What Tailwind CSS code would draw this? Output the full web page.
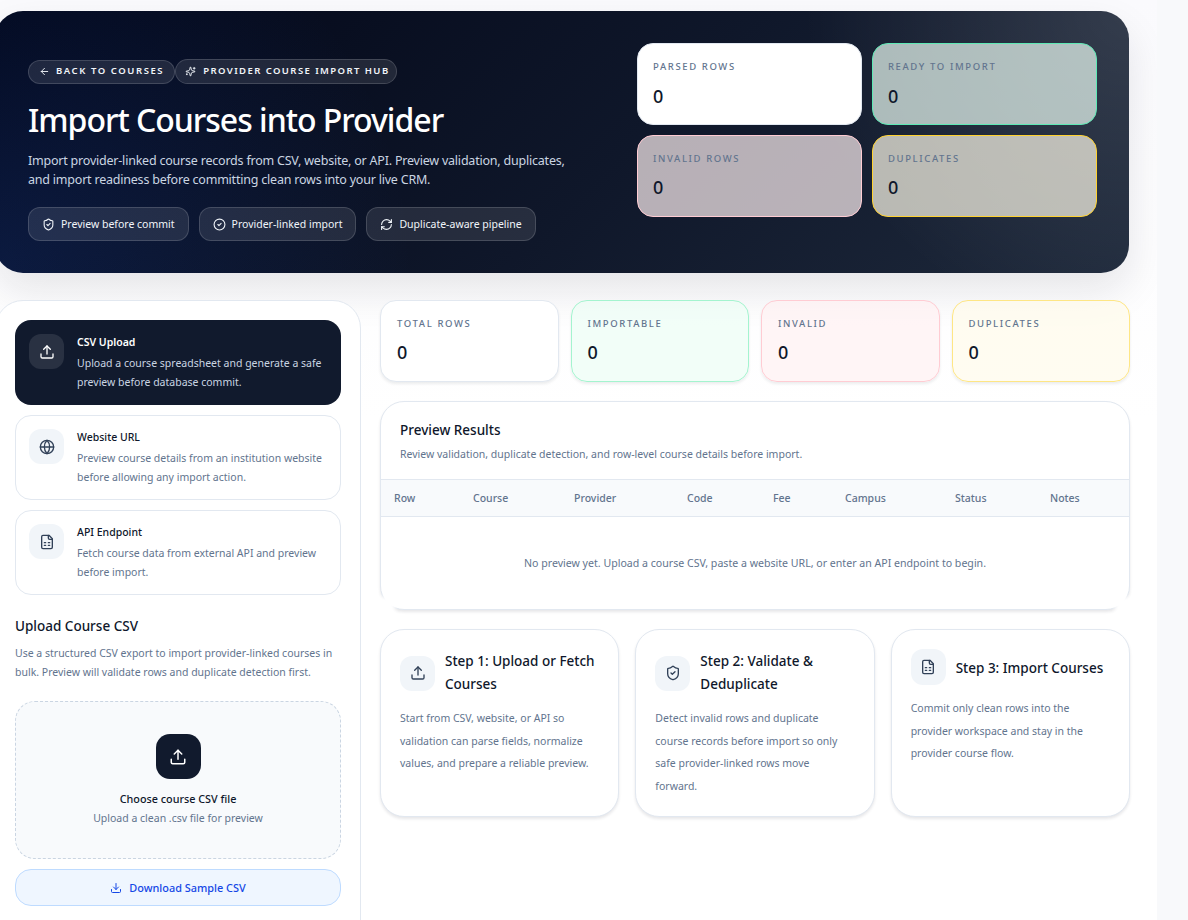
<!DOCTYPE html>
<html lang="en">
<head>
    <meta charset="UTF-8">
    <meta name="viewport" content="width=device-width, initial-scale=1.0">
    <title>Import Courses into Provider</title>
    <script src="https://cdn.jsdelivr.net/npm/@tailwindcss/browser@4"></script>
</head>
<body class="h-[920px] w-[1188px] overflow-hidden bg-[#f8f9fb] font-['Noto_Sans',sans-serif] text-slate-900">
<div class="h-[920px] w-[1157px] overflow-hidden bg-white bg-[linear-gradient(180deg,#fafafd_0px,#ffffff_420px)] pt-[11px] pl-0">
    <div class="ml-[-5px] w-[1135px]">

        <!-- hero -->
        <section class="flex h-[262px] w-[1134px] justify-between rounded-[28px] bg-[radial-gradient(circle_at_top_right,rgba(255,255,255,0.12),transparent_28%),radial-gradient(circle_at_bottom_left,rgba(37,99,235,0.17),transparent_36%),linear-gradient(135deg,#020617,#0f172a_55%,#1e293b)] pt-8 pr-8 pl-[33px] shadow-[0_18px_40px_rgba(15,23,42,0.1)]">
            <div class="w-[560px] pt-4">
                <div class="flex items-center">
                    <a class="flex h-6 items-center gap-[6px] rounded-full border border-white/15 bg-white/10 pr-[10px] pl-[10px] text-[9.5px] font-semibold tracking-[0.165em] text-slate-100 uppercase">
                        <svg class="size-[11px]" viewBox="0 0 24 24" fill="none" stroke="currentColor" stroke-width="2" stroke-linecap="round" stroke-linejoin="round"><path d="m12 19-7-7 7-7"/><path d="M19 12H5"/></svg>
                        Back to courses
                    </a>
                    <span class="flex h-[25px] items-center gap-[7px] rounded-full border border-white/15 bg-white/10 pr-[6px] pl-[9px] text-[9.5px] font-semibold tracking-[0.15em] text-slate-100 uppercase">
                        <svg class="size-[11px]" viewBox="0 0 24 24" fill="none" stroke="currentColor" stroke-width="2" stroke-linecap="round" stroke-linejoin="round"><path d="M9.937 15.5A2 2 0 0 0 8.5 14.063l-6.135-1.582a.5.5 0 0 1 0-.962L8.5 9.936A2 2 0 0 0 9.937 8.5l1.582-6.135a.5.5 0 0 1 .963 0L14.063 8.5A2 2 0 0 0 15.5 9.937l6.135 1.581a.5.5 0 0 1 0 .964L15.5 14.063a2 2 0 0 0-1.437 1.437l-1.582 6.135a.5.5 0 0 1-.963 0z"/><path d="M20 3v4"/><path d="M22 5h-4"/><path d="M4 17v2"/><path d="M5 18H3"/></svg>
                        Provider course import hub
                    </span>
                </div>
                <h1 class="mt-[15px] text-[32px] leading-[42px] font-medium tracking-[-0.032em] text-white">Import Courses into Provider</h1>
                <p class="mt-2.5 w-[545px] text-[12.5px] leading-[19px] tracking-[-0.017em] text-slate-300">Import provider-linked course records from CSV, website, or API. Preview validation, duplicates, and import readiness before committing clean rows into your live CRM.</p>
                <div class="mt-[18px] flex gap-2.5">
                    <span class="flex h-[34px] items-center gap-[6px] rounded-xl border border-white/15 bg-white/10 px-[13px] pt-px text-[10.5px] text-slate-100">
                        <svg class="size-[13px]" viewBox="0 0 24 24" fill="none" stroke="currentColor" stroke-width="2" stroke-linecap="round" stroke-linejoin="round"><path d="M20 13c0 5-3.5 7.5-7.66 8.95a1 1 0 0 1-.67-.01C7.5 20.5 4 18 4 13V6a1 1 0 0 1 1-1c2 0 4.5-1.2 6.24-2.72a1.17 1.17 0 0 1 1.52 0C14.51 3.81 17 5 19 5a1 1 0 0 1 1 1z"/><path d="m9 12 2 2 4-4"/></svg>
                        Preview before commit
                    </span>
                    <span class="flex h-[34px] items-center gap-[6px] rounded-xl border border-white/15 bg-white/10 px-[13px] pt-px text-[10.5px] text-slate-100">
                        <svg class="size-[13px]" viewBox="0 0 24 24" fill="none" stroke="currentColor" stroke-width="2" stroke-linecap="round" stroke-linejoin="round"><circle cx="12" cy="12" r="10"/><path d="m9 12 2 2 4-4"/></svg>
                        Provider-linked import
                    </span>
                    <span class="flex h-[34px] items-center gap-[6px] rounded-xl border border-white/15 bg-white/10 px-[13px] pt-px text-[10.5px] text-slate-100">
                        <svg class="size-[13px]" viewBox="0 0 24 24" fill="none" stroke="currentColor" stroke-width="2" stroke-linecap="round" stroke-linejoin="round"><path d="M3 12a9 9 0 0 1 9-9 9.75 9.75 0 0 1 6.74 2.74L21 8"/><path d="M21 3v5h-5"/><path d="M21 12a9 9 0 0 1-9 9 9.75 9.75 0 0 1-6.74-2.74L3 16"/><path d="M8 16H3v5"/></svg>
                        Duplicate-aware pipeline
                    </span>
                </div>
            </div>
            <div class="grid h-[174px] w-[460px] grid-cols-2 grid-rows-2 gap-2.5">
                <div class="rounded-2xl border border-slate-200 bg-white pt-4 pl-[15px]">
                    <p class="text-[9.5px] font-medium tracking-[0.17em] text-slate-500 uppercase">Parsed rows</p>
                    <p class="mt-[7.5px] text-lg font-medium">0</p>
                </div>
                <div class="rounded-2xl border border-emerald-300 bg-emerald-50/70 pt-4 pl-[15px]">
                    <p class="text-[9.5px] font-medium tracking-[0.17em] text-slate-500 uppercase">Ready to import</p>
                    <p class="mt-[7.5px] text-lg font-medium">0</p>
                </div>
                <div class="rounded-2xl border border-rose-200 bg-rose-50/70 pt-4 pl-[15px]">
                    <p class="text-[9.5px] font-medium tracking-[0.17em] text-slate-500 uppercase">Invalid rows</p>
                    <p class="mt-[7px] text-lg font-medium">0</p>
                </div>
                <div class="rounded-2xl border border-amber-300 bg-amber-50/70 pt-4 pl-[15px]">
                    <p class="text-[9.5px] font-medium tracking-[0.17em] text-slate-500 uppercase">Duplicates</p>
                    <p class="mt-[7px] text-lg font-medium">0</p>
                </div>
            </div>
        </section>

        <div class="mt-[27px] flex items-start gap-[19px]">

            <!-- sidebar -->
            <aside class="h-[700px] w-[366px] shrink-0 rounded-[28px] border border-[#e2e8f0] bg-white p-[19px]">
                <div class="flex flex-col gap-2.5">
                    <button class="flex h-[85px] gap-[13px] rounded-2xl bg-[#111a2d] p-3.5 text-left">
                        <span class="flex size-[35px] shrink-0 items-center justify-center rounded-xl bg-white/10 text-white">
                            <svg class="size-4" viewBox="0 0 24 24" fill="none" stroke="currentColor" stroke-width="2" stroke-linecap="round" stroke-linejoin="round"><path d="M21 15v4a2 2 0 0 1-2 2H5a2 2 0 0 1-2-2v-4"/><path d="m17 8-5-5-5 5"/><path d="M12 3v12"/></svg>
                        </span>
                        <span>
                            <span class="block text-[10.5px] leading-4 font-semibold text-white">CSV Upload</span>
                            <span class="mt-1 block text-[10.5px] leading-[19px] text-slate-300">Upload a course spreadsheet and generate a safe preview before database commit.</span>
                        </span>
                    </button>
                    <button class="flex h-[85px] gap-[13px] rounded-2xl border border-[#e2e8f0] bg-white p-[13px] text-left">
                        <span class="flex size-[35px] shrink-0 items-center justify-center rounded-xl bg-slate-100 text-slate-700">
                            <svg class="size-4" viewBox="0 0 24 24" fill="none" stroke="currentColor" stroke-width="2" stroke-linecap="round" stroke-linejoin="round"><circle cx="12" cy="12" r="10"/><path d="M12 2a14.5 14.5 0 0 0 0 20 14.5 14.5 0 0 0 0-20"/><path d="M2 12h20"/></svg>
                        </span>
                        <span>
                            <span class="block text-[10.5px] leading-4 font-medium text-slate-900">Website URL</span>
                            <span class="mt-1 block text-[10.5px] leading-[19px] text-slate-500">Preview course details from an institution website before allowing any import action.</span>
                        </span>
                    </button>
                    <button class="flex h-[85px] gap-[13px] rounded-2xl border border-[#e2e8f0] bg-white p-[13px] text-left">
                        <span class="flex size-[35px] shrink-0 items-center justify-center rounded-xl bg-slate-100 text-slate-700">
                            <svg class="size-4" viewBox="0 0 24 24" fill="none" stroke="currentColor" stroke-width="2" stroke-linecap="round" stroke-linejoin="round"><path d="M15 2H6a2 2 0 0 0-2 2v16a2 2 0 0 0 2 2h12a2 2 0 0 0 2-2V7Z"/><path d="M14 2v4a2 2 0 0 0 2 2h4"/><path d="M8 13h2"/><path d="M14 13h2"/><path d="M8 17h2"/><path d="M14 17h2"/></svg>
                        </span>
                        <span>
                            <span class="block text-[10.5px] leading-4 font-medium text-slate-900">API Endpoint</span>
                            <span class="mt-1 block text-[10.5px] leading-[19px] text-slate-500">Fetch course data from external API and preview before import.</span>
                        </span>
                    </button>
                </div>

                <h2 class="mt-[21px] text-[13.5px] leading-5 font-medium">Upload Course CSV</h2>
                <p class="mt-2 text-[10.5px] leading-[19px] text-slate-500">Use a structured CSV export to import provider-linked courses in bulk. Preview will validate rows and duplicate detection first.</p>

                <div class="mt-[19px] flex h-[158px] flex-col items-center rounded-[20px] border border-dashed border-slate-300 bg-[#f8fafc] pt-8">
                    <span class="flex size-[45px] items-center justify-center rounded-[14px] bg-[#111a2d] text-white">
                        <svg class="size-[18px]" viewBox="0 0 24 24" fill="none" stroke="currentColor" stroke-width="2" stroke-linecap="round" stroke-linejoin="round"><path d="M21 15v4a2 2 0 0 1-2 2H5a2 2 0 0 1-2-2v-4"/><path d="m17 8-5-5-5 5"/><path d="M12 3v12"/></svg>
                    </span>
                    <p class="mt-2.5 text-[10.8px] leading-[19px] font-medium">Choose course CSV file</p>
                    <p class="mt-px text-[10.5px] leading-[19px] text-slate-500">Upload a clean .csv file for preview</p>
                </div>
                <button class="mt-2.5 flex h-[37px] w-full items-center justify-center gap-[7px] rounded-2xl border border-blue-200 bg-blue-50 pt-px text-[10.9px] font-medium text-blue-700">
                    <svg class="size-3" viewBox="0 0 24 24" fill="none" stroke="currentColor" stroke-width="2" stroke-linecap="round" stroke-linejoin="round"><path d="M21 15v4a2 2 0 0 1-2 2H5a2 2 0 0 1-2-2v-4"/><path d="m7 10 5 5 5-5"/><path d="M12 15V3"/></svg>
                    Download Sample CSV
                </button>
            </aside>

            <!-- right column -->
            <div class="w-[750px] shrink-0">
                <div class="grid grid-cols-4 gap-3">
                    <div class="h-[82px] rounded-2xl border border-[#e2e8f0] bg-white px-4 pt-4 shadow-[0_2px_3px_rgba(15,23,42,0.08)]">
                        <p class="text-[9.5px] font-medium tracking-[0.17em] text-slate-500 uppercase">Total rows</p>
                        <p class="mt-[6.5px] text-lg font-medium">0</p>
                    </div>
                    <div class="h-[82px] rounded-2xl border border-emerald-200 bg-emerald-50/70 px-4 pt-4 shadow-[0_2px_3px_rgba(15,23,42,0.08)]">
                        <p class="text-[9.5px] font-medium tracking-[0.17em] text-slate-500 uppercase">Importable</p>
                        <p class="mt-[6.5px] text-lg font-medium">0</p>
                    </div>
                    <div class="h-[82px] rounded-2xl border border-rose-200 bg-rose-50/70 px-4 pt-4 shadow-[0_2px_3px_rgba(15,23,42,0.08)]">
                        <p class="text-[9.5px] font-medium tracking-[0.17em] text-slate-500 uppercase">Invalid</p>
                        <p class="mt-[6.5px] text-lg font-medium">0</p>
                    </div>
                    <div class="h-[82px] rounded-2xl border border-amber-200 bg-amber-50/70 px-4 pt-4 shadow-[0_2px_3px_rgba(15,23,42,0.08)]">
                        <p class="text-[9.5px] font-medium tracking-[0.17em] text-slate-500 uppercase">Duplicates</p>
                        <p class="mt-[6.5px] text-lg font-medium">0</p>
                    </div>
                </div>

                <section class="relative mt-[19px] h-[209px] rounded-[24px] border border-[#e2e8f0] bg-white shadow-[0_2px_3px_rgba(15,23,42,0.1)]">
                    <div class="h-[77px] px-[19px] pt-[18px]">
                        <h2 class="text-[13.5px] leading-5 font-medium">Preview Results</h2>
                        <p class="mt-1.5 text-[10.5px] leading-4 text-slate-500">Review validation, duplicate detection, and row-level course details before import.</p>
                    </div>
                    <table class="w-full table-fixed text-left text-[10.5px]">
                        <thead class="bg-[#f8fafc] text-slate-500">
                            <tr class="h-[37px] border-y border-[#e2e8f0]">
                                <th class="w-[79px] pt-[2px] pl-[13px] font-medium">Row</th>
                                <th class="w-[101px] pt-[2px] pl-[13px] font-medium">Course</th>
                                <th class="w-[113px] pt-[2px] pl-[13px] font-medium">Provider</th>
                                <th class="w-[86px] pt-[2px] pl-[13px] font-medium">Code</th>
                                <th class="w-[72px] pt-[2px] pl-[13px] font-medium">Fee</th>
                                <th class="w-[110px] pt-[2px] pl-[13px] font-medium">Campus</th>
                                <th class="w-[95px] pt-[2px] pl-[13px] font-medium">Status</th>
                                <th class="pt-[2px] pl-[13px] font-medium">Notes</th>
                            </tr>
                        </thead>
                        <tbody>
                            <tr>
                                <td colspan="8" class="h-[93px] pt-[2px] text-center text-[10.6px] text-slate-500">No preview yet. Upload a course CSV, paste a website URL, or enter an API endpoint to begin.</td>
                            </tr>
                        </tbody>
                    </table>
                    <!-- washed-out bottom corners -->
                    <span class="absolute -bottom-[6px] -left-[6px] h-[18px] w-[20px] bg-white blur-[2px]"></span>
                    <span class="absolute -right-[6px] -bottom-[6px] h-[18px] w-[20px] bg-white blur-[2px]"></span>
                </section>

                <div class="mt-[19px] grid grid-cols-3 gap-4">
                    <div class="h-[188px] rounded-[24px] border border-[#e2e8f0] bg-white pt-5 pr-[23px] pl-[19px] shadow-[0_2px_3px_rgba(15,23,42,0.1)]">
                        <div class="flex items-center gap-2.5">
                            <span class="flex h-[35px] w-[35px] shrink-0 items-center justify-center rounded-xl bg-slate-100 text-slate-700">
                                <svg class="size-4" viewBox="0 0 24 24" fill="none" stroke="currentColor" stroke-width="2" stroke-linecap="round" stroke-linejoin="round"><path d="M21 15v4a2 2 0 0 1-2 2H5a2 2 0 0 1-2-2v-4"/><path d="m17 8-5-5-5 5"/><path d="M12 3v12"/></svg>
                            </span>
                            <h3 class="text-[13.5px] leading-[23px] font-medium">Step 1: Upload or Fetch Courses</h3>
                        </div>
                        <p class="mt-[11px] text-[10.5px] leading-[22.5px] text-slate-500">Start from CSV, website, or API so validation can parse fields, normalize values, and prepare a reliable preview.</p>
                    </div>
                    <div class="h-[188px] rounded-[24px] border border-[#e2e8f0] bg-white pt-5 pr-[23px] pl-[19px] shadow-[0_2px_3px_rgba(15,23,42,0.1)]">
                        <div class="flex items-center gap-2.5">
                            <span class="flex h-[35px] w-[35px] shrink-0 items-center justify-center rounded-xl bg-slate-100 text-slate-700">
                                <svg class="size-4" viewBox="0 0 24 24" fill="none" stroke="currentColor" stroke-width="2" stroke-linecap="round" stroke-linejoin="round"><path d="M20 13c0 5-3.5 7.5-7.66 8.95a1 1 0 0 1-.67-.01C7.5 20.5 4 18 4 13V6a1 1 0 0 1 1-1c2 0 4.5-1.2 6.24-2.72a1.17 1.17 0 0 1 1.52 0C14.51 3.81 17 5 19 5a1 1 0 0 1 1 1z"/><path d="m9 12 2 2 4-4"/></svg>
                            </span>
                            <h3 class="text-[13.5px] leading-[23px] font-medium">Step 2: Validate &amp; Deduplicate</h3>
                        </div>
                        <p class="mt-[11px] text-[10.5px] leading-[22.5px] text-slate-500">Detect invalid rows and duplicate course records before import so only safe provider-linked rows move forward.</p>
                    </div>
                    <div class="h-[188px] rounded-[24px] border border-[#e2e8f0] bg-white pt-[19px] pr-[19px] pl-[19px] shadow-[0_2px_3px_rgba(15,23,42,0.1)]">
                        <div class="flex items-center gap-2.5">
                            <span class="flex h-9 w-[35px] shrink-0 items-center justify-center rounded-xl bg-slate-100 text-slate-700">
                                <svg class="size-4" viewBox="0 0 24 24" fill="none" stroke="currentColor" stroke-width="2" stroke-linecap="round" stroke-linejoin="round"><path d="M15 2H6a2 2 0 0 0-2 2v16a2 2 0 0 0 2 2h12a2 2 0 0 0 2-2V7Z"/><path d="M14 2v4a2 2 0 0 0 2 2h4"/><path d="M8 13h2"/><path d="M14 13h2"/><path d="M8 17h2"/><path d="M14 17h2"/></svg>
                            </span>
                            <h3 class="pt-[2px] text-[13.5px] leading-[23px] font-medium">Step 3: Import Courses</h3>
                        </div>
                        <p class="mt-3 text-[10.5px] leading-[22.5px] text-slate-500">Commit only clean rows into the provider workspace and stay in the provider course flow.</p>
                    </div>
                </div>
            </div>
        </div>
    </div>
</div>
</body>
</html>
